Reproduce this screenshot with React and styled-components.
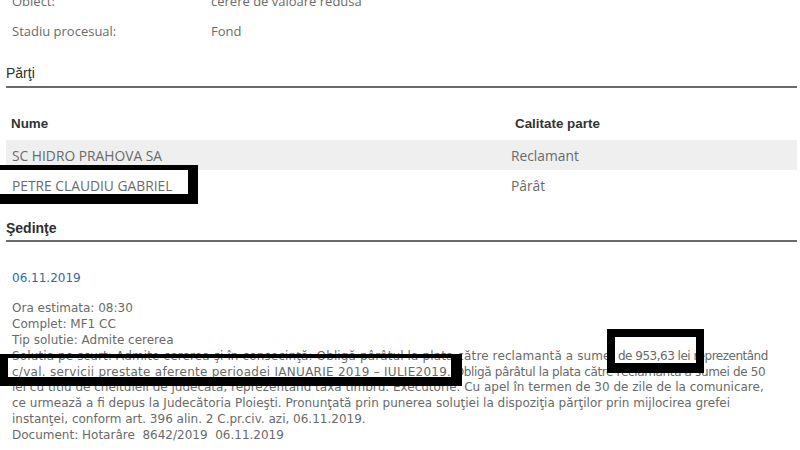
import React from 'react';
import styled, { createGlobalStyle } from 'styled-components';

const GlobalStyle = createGlobalStyle`
  html, body {
    margin: 0;
    padding: 0;
    background: #fff;
  }
`;

const StyledPage = styled.div`
  position: relative;
  display: flow-root;
  width: 800px;
  height: 450px;
  overflow: hidden;
  padding: 0 3px 0 6px;
  box-sizing: border-box;
`;

const InfoList = styled.div`
  margin-top: -14px;
`;

const InfoRow = styled.div`
  display: grid;
  grid-template-columns: 199px 1fr;
  align-items: center;
  height: 30px;
  padding-left: 6px;
  font-family: 'Open Sans', 'Liberation Sans', sans-serif;
  font-size: 13px;
  color: #6a6a6a;
`;

const SectionTitle = styled.h3`
  margin: ${({ $top }) => $top}px 0 0;
  padding: 0 0 ${({ $pad }) => $pad}px;
  border-bottom: 2px solid #6b6b6b;
  font-family: 'Liberation Sans', Arial, sans-serif;
  font-size: 14px;
  line-height: 20px;
  font-weight: ${({ $bold }) => ($bold ? 700 : 400)};
  color: #2e2e2e;
`;

const PartiesTable = styled.div`
  margin-top: 19px;
  display: grid;
  grid-template-columns: 499px 1fr;
`;

const HeaderCell = styled.div`
  display: flex;
  align-items: center;
  height: 33px;
  padding-left: ${({ $indent }) => $indent}px;
  font-family: 'Liberation Sans', Arial, sans-serif;
  font-size: 13.4px;
  font-weight: 700;
  color: #333;
`;

const Cell = styled.div`
  display: flex;
  align-items: center;
  height: 30px;
  padding-left: 6px;
  background: ${({ $striped }) => ($striped ? '#efefef' : '#fff')};
  font-family: 'Open Sans', 'Liberation Sans', sans-serif;
  font-size: 13.8px;
  color: #6a6a6a;
`;

const Session = styled.div`
  padding-left: 6px;
  font-family: 'DejaVu Sans', Verdana, sans-serif;
  font-size: 12px;
  line-height: 15.9px;
  color: #6a6a6a;
`;

const SessionDate = styled.div`
  margin-top: 29px;
  margin-bottom: 14px;
  color: #2f6b9c;
`;

const Detail = styled.div`
  white-space: nowrap;
`;

const Run = styled.span`
  letter-spacing: ${({ $spacing }) => $spacing}px;
`;

const Highlight = styled.div`
  position: absolute;
  left: ${({ $x }) => $x}px;
  top: ${({ $y }) => $y}px;
  width: ${({ $w }) => $w}px;
  height: ${({ $h }) => $h}px;
  box-sizing: border-box;
  border: solid #000;
  border-width: ${({ $bw }) => $bw};
  pointer-events: none;
`;

const parties = [
  { name: 'SC HIDRO PRAHOVA SA', role: 'Reclamant' },
  { name: 'PETRE CLAUDIU GABRIEL', role: 'Pârât' },
];

const App = () => (
  <>
    <GlobalStyle />
    <StyledPage>
      <InfoList>
        <InfoRow>
          <span>Obiect:</span>
          <span>cerere de valoare redusă</span>
        </InfoRow>
        <InfoRow>
          <span>Stadiu procesual:</span>
          <span>Fond</span>
        </InfoRow>
      </InfoList>

      <SectionTitle $top={17} $pad={3}>Părţi</SectionTitle>

      <PartiesTable>
        <HeaderCell $indent={5}>Nume</HeaderCell>
        <HeaderCell $indent={10}>Calitate parte</HeaderCell>
        {parties.map((p, i) => (
          <React.Fragment key={p.name}>
            <Cell $striped={i % 2 === 0}>{p.name}</Cell>
            <Cell $striped={i % 2 === 0}>{p.role}</Cell>
          </React.Fragment>
        ))}
      </PartiesTable>

      <SectionTitle $top={18} $pad={2} $bold>
        Şedinţe
      </SectionTitle>

      <Session>
        <SessionDate>06.11.2019</SessionDate>
        <Detail>Ora estimata: 08:30</Detail>
        <Detail>Complet: MF1 CC</Detail>
        <Detail>Tip solutie: Admite cererea</Detail>
        <Detail>
          <Run $spacing={0.12}>
            Solutia pe scurt: Admite cererea şi în consecinţă: Obligă pârâtul la plata către reclamantă a sumei{' '}
          </Run>
          <Run $spacing={-0.5}>de 953,63 lei reprezentând</Run>
          <br />
          <Run $spacing={0.27}>
            c/val. servicii prestate aferente perioadei IANUARIE 2019 – IULIE2019.
          </Run>
          <Run $spacing={-0.35}> Obligă pârâtul la plata către reclamantă a sumei de 50</Run>
          <br />
          lei cu titlu de cheltuieli de judecată, reprezentând taxa timbru. Executorie. Cu apel în termen de 30 de zile de la comunicare,
          <br />
          ce urmează a fi depus la Judecătoria Ploieşti. Pronunţată prin punerea soluţiei la dispoziţia părţilor prin mijlocirea grefei
          <br />
          instanţei, conform art. 396 alin. 2 C.pr.civ. azi, 06.11.2019.
        </Detail>
        <Detail>Document: Hotarâre&nbsp; 8642/2019&nbsp; 06.11.2019</Detail>
      </Session>

      {/* black marker boxes drawn over the page */}
      <Highlight $x={-10} $y={165} $w={208} $h={39} $bw="5px 10px 10px 10px" />
      <Highlight $x={-4} $y={354} $w={466} $h={32} $bw="4px 11px 9px 12px" />
      <Highlight $x={607} $y={329} $w={97} $h={44} $bw="8px 8px 10px 8px" />
    </StyledPage>
  </>
);

export default App;
